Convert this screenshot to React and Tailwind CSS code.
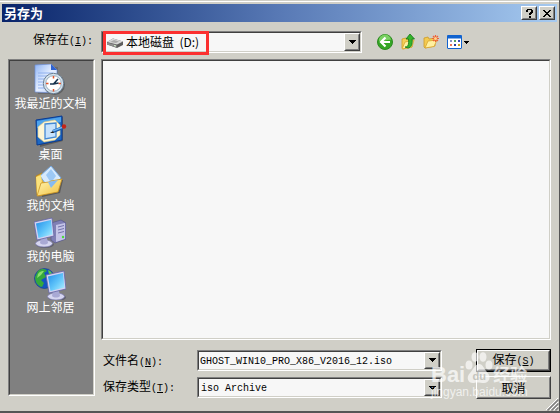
import { useState } from 'react';

const SUNKEN = 'border border-t-[#808080] border-l-[#808080] border-b-white border-r-white';
const SUNKEN_INNER = 'border border-t-[#404040] border-l-[#404040] border-b-[#d0cfc7] border-r-[#d0cfc7]';
const RAISED = 'border border-t-white border-l-white border-b-[#404040] border-r-[#404040]';
const RAISED_INNER = 'border border-t-[#d0cfc7] border-l-[#d0cfc7] border-b-[#808080] border-r-[#808080]';
const MONO = "font-['Liberation_Mono','Noto_Sans_CJK_SC',monospace] text-[10px]";

function RecentIcon() {
  return (
    <svg width="32" height="32" viewBox="0 0 32 32" aria-hidden="true">
      <defs>
        <linearGradient id="page" x1="0" y1="0" x2="1" y2="1">
          <stop offset="0" stopColor="#8fb4f4" />
          <stop offset="0.5" stopColor="#e6efff" />
          <stop offset="1" stopColor="#b9cffa" />
        </linearGradient>
      </defs>
      <path d="M2 2l22 1v27H4z" fill="#555" opacity="0.5" />
      <path d="M1 1l16-1 6 6v23L1 28z" fill="url(#page)" stroke="#6f8fd8" strokeWidth="0.7" />
      <path d="M17 0v6h6z" fill="#2f62cf" />
      <path d="M4 9h15M4 12h10M4 15h7M4 18h5M4 21h5M4 24h6" stroke="#8fb0ee" />
      <circle cx="20.5" cy="20.5" r="10.5" fill="#4a4a4a" opacity="0.6" />
      <circle cx="19.5" cy="19.5" r="10.2" fill="#d5e2ec" stroke="#6a7f94" />
      <circle cx="19.5" cy="19.5" r="7.8" fill="#fff" stroke="#9ab0c2" />
      <path d="M19.5 12v2.5M19.5 25v2.5M12 19.5h2.5M24.5 19.5H27" stroke="#e0542c" strokeWidth="1.5" />
      <path d="M24 15l-4.5 5H16M19.5 20l5-1" stroke="#17324d" strokeWidth="1.6" fill="none" />
    </svg>
  );
}

function DesktopIcon() {
  return (
    <svg width="32" height="32" viewBox="0 0 32 32" aria-hidden="true">
      <path d="M3 6l25-4v24L5 32z" fill="#444" opacity="0.6" />
      <path d="M1 5l26-4v24L2 30z" fill="#1d69c4" stroke="#0a3b92" />
      <path d="M2 6l24-4v5L2 13z" fill="#4ea3ec" />
      <path d="M9 7l11-2 5 5v10l-5 5-11 2-6-5V12z" fill="#fdf6d5" stroke="#e4c877" strokeWidth="0.6" />
      <path d="M10 9l11-1v14l-11 2z" fill="#c6e2fc" stroke="#4489d4" strokeWidth="1.3" />
      <path d="M18 16.5l10-4" stroke="#1b5cad" strokeWidth="3.5" />
      <path d="M18 16l10-4" stroke="#6db3f2" strokeWidth="1.5" />
      <circle cx="29" cy="11.5" r="2.2" fill="#c42418" />
      <path d="M15 18l3-2 1 2z" fill="#202020" />
    </svg>
  );
}

function DocumentsIcon() {
  return (
    <svg width="32" height="32" viewBox="0 0 32 32" aria-hidden="true">
      <defs>
        <linearGradient id="folderFront" x1="0" y1="0" x2="1" y2="1">
          <stop offset="0" stopColor="#fff7b5" />
          <stop offset="1" stopColor="#f2bf3d" />
        </linearGradient>
      </defs>
      <path d="M5 13l24 1-3 13-18 4z" fill="#3f3f3f" opacity="0.6" />
      <path d="M2 10l6-3 3 3 13-2 1 16-20 6-2-1z" fill="#e8b437" stroke="#b57d10" strokeWidth="0.7" />
      <path d="M6 10L17 0l10 12-11 12z" fill="#d6eafd" stroke="#75a9e2" />
      <path d="M12 9l5-6 5 7-5 7z" fill="#9cc9f5" />
      <path d="M2 11l5-2 1 8-4 13-1-1z" fill="#fbe27c" />
      <path d="M3 30l4-13 8-1 2-1 11-2-4 13z" fill="url(#folderFront)" stroke="#c9921f" strokeWidth="0.8" />
      <path d="M14 16l3 6 7-8z" fill="#86baf0" />
    </svg>
  );
}

function Monitor() {
  return (
    <g>
      <ellipse cx="11" cy="27.5" rx="9" ry="3.5" fill="#3f3f55" opacity="0.5" />
      <ellipse cx="10" cy="26.5" rx="8.5" ry="3.5" fill="#d6d6f0" stroke="#7b7bb0" strokeWidth="0.7" />
      <path d="M7 21h6l1 5c-2 2-6 2-8 0z" fill="#a9a9d4" />
      <path d="M0 5l18-4 2 18-17 4z" fill="#d3d3f1" stroke="#6363a4" strokeWidth="0.8" />
      <path d="M2 6.5L17 3l1.5 14.5L4.5 21z" fill="url(#screen)" />
    </g>
  );
}

function ComputerIcon() {
  return (
    <svg width="32" height="32" viewBox="0 0 32 32" aria-hidden="true">
      <defs>
        <linearGradient id="screen" x1="0" y1="0" x2="1" y2="1">
          <stop offset="0" stopColor="#218de9" />
          <stop offset="0.55" stopColor="#62c6fa" />
          <stop offset="1" stopColor="#b5f1ff" />
        </linearGradient>
      </defs>
      <path d="M17 6l10-3 5 3v16l-11 4-4-3z" fill="#8080b5" stroke="#56568c" strokeWidth="0.7" />
      <path d="M22 8l9-2v16l-9 3z" fill="#c4c4e7" />
      <path d="M24 10l6-1.5M24 13l6-1.5M24 16l6-1.5" stroke="#7474ac" />
      <circle cx="29" cy="20" r="1.2" fill="#48dd38" />
      <Monitor />
    </svg>
  );
}

function NetworkIcon() {
  return (
    <svg width="32" height="32" viewBox="0 0 32 32" aria-hidden="true">
      <circle cx="10.5" cy="10.5" r="10" fill="#1555bf" stroke="#0b3a8c" strokeWidth="0.6" />
      <path d="M4 3c4-3 8-2 9 0l-3 2 2 4-5 3 3 3-2 4C3 18 1 13 1 9z" fill="#36a83b" />
      <path d="M14 2c3 1 5 4 5 6l-4-2z" fill="#5acc46" />
      <path d="M4 6c2-3 4-3 6-3L7 7l-4 3z" fill="#8be06c" />
      <g transform="translate(12 2)">
        <Monitor />
      </g>
    </svg>
  );
}

function DriveIcon() {
  return (
    <svg width="16" height="10" viewBox="0 0 16 10" aria-hidden="true">
      <path d="M0 4l6-3.5 10 3V7l-6 3L0 6.5z" fill="#5d5d5d" />
      <path d="M0 4l6-3.5 10 3-6 3z" fill="#d9d9d9" />
      <path d="M3 4l4-2 5 1.5-3 1.5z" fill="#aaa" />
      <path d="M0 4.5l9.5 2.5v2.5L0 6.5z" fill="#8d8d8d" />
      <path d="M7 7.5l2 .5" stroke="#d8f5d0" />
    </svg>
  );
}

function BackIcon() {
  return (
    <svg width="16" height="16" viewBox="0 0 16 16" aria-hidden="true">
      <circle cx="8" cy="8" r="7.5" fill="#35a625" stroke="#2c8a20" />
      <path d="M2 7a6 6 0 0112-1c-4-1-8 2-12 1z" fill="#7ad062" />
      <path d="M8.5 3.5L4 8l4.5 4.5M4.5 8H13" fill="none" stroke="#fff" strokeWidth="2.2" />
    </svg>
  );
}

function UpIcon() {
  return (
    <svg width="14" height="16" viewBox="0 0 14 16" aria-hidden="true">
      <path d="M1 5l4-1 1 1 5-1v9l-9 2-1-1z" fill="#f4cf58" stroke="#cf9d25" strokeWidth="0.8" />
      <path d="M1 15l3-7 9-2-2 7z" fill="#fff0a0" stroke="#d8a52d" strokeWidth="0.8" />
      <path d="M4 13c3 0 4-2 3.500-8H5l4-5 4.500 5H11c1 5-1 9-4 9z" fill="#35b52a" stroke="#13751a" strokeWidth="0.8" />
    </svg>
  );
}

function NewFolderIcon() {
  return (
    <svg width="16" height="14" viewBox="0 0 16 14" aria-hidden="true">
      <path d="M1 3l4-1 1 2 6-1v8l-10 2-1-1z" fill="#f3ca50" stroke="#cc9b28" strokeWidth="0.8" />
      <path d="M2 13l3-7 9-1-3 6.500z" fill="#fff0a0" stroke="#d8a52d" strokeWidth="0.8" />
      <path d="M12.5 0v7M9 3.5h7M10 1l5 5M15 1l-5 5" stroke="#ee6038" strokeWidth="1.2" />
      <circle cx="12.5" cy="3.5" r="1.5" fill="#ffd58a" />
    </svg>
  );
}

function ViewIcon() {
  return (
    <svg width="22" height="14" viewBox="0 0 22 14" aria-hidden="true">
      <rect x="0.5" y="0.5" width="14" height="13" rx="0.5" fill="#fff" stroke="#1163cf" />
      <path d="M0 2h15" stroke="#1163cf" strokeWidth="3" />
      <path d="M3 5h2v2H3z" fill="#8292c8" />
      <path d="M7 5h2v2H7z" fill="#5aa55a" />
      <path d="M11 5h2v2h-2z" fill="#394ab8" />
      <path d="M3 9h2v2H3z" fill="#ed7754" />
      <path d="M7 9h2v2H7z" fill="#243fa2" />
      <path d="M11 9h2v2h-2z" fill="#c5a11e" />
      <path d="M17 6h5v1h-1v1h-1v1h-1V8h-1V7h-1z" fill="#000" />
    </svg>
  );
}

function HelpGlyph() {
  return (
    <svg width="7" height="9" viewBox="0 0 7 9" aria-hidden="true" shapeRendering="crispEdges">
      <path d="M1 0h5v1h1v3H6v1H5v1H3V4h1V3h1V1H2v2H0V1h1zM3 7h2v2H3z" />
    </svg>
  );
}

function CloseGlyph() {
  return (
    <svg width="8" height="7" viewBox="0 0 8 7" aria-hidden="true" shapeRendering="crispEdges">
      <path d="M0 0h2v1h1v1h2V1h1V0h2v1H7v1H6v1H5v1h1v1h1v1h1v1H6V6H5V5H3v1H2v1H0V6h1V5h1V4h1V3H2V2H1V1H0z" />
    </svg>
  );
}

function Key({ children }) {
  return (
    <span className={MONO}>
      (<u>{children}</u>)
    </span>
  );
}

function DropArrow() {
  return (
    <span className={`pointer-events-none absolute inset-y-px right-px w-4 bg-[#d0cfc7] ${RAISED}`}>
      <span className={`flex h-full items-center justify-center ${RAISED_INNER}`}>
        <svg width="7" height="4" viewBox="0 0 7 4" aria-hidden="true" shapeRendering="crispEdges">
          <path d="M0 0h7v1H6v1H5v1H4v1H3V3H2V2H1V1H0z" />
        </svg>
      </span>
    </span>
  );
}

function Field({ className, children }) {
  return (
    <div className={`relative ${SUNKEN} ${className}`}>
      <div className={`h-full bg-[#f7f7f7] ${SUNKEN_INNER}`}>{children}</div>
      <DropArrow />
    </div>
  );
}

function TitleButton({ label, children }) {
  return (
    <button type="button" aria-label={label} className={`h-[14px] w-4 bg-[#d0cfc7] ${RAISED}`}>
      <span className={`flex h-full items-center justify-center ${RAISED_INNER}`}>{children}</span>
    </button>
  );
}

const PLACES = [
  { name: '我最近的文档', Icon: RecentIcon },
  { name: '桌面', Icon: DesktopIcon },
  { name: '我的文档', Icon: DocumentsIcon },
  { name: '我的电脑', Icon: ComputerIcon },
  { name: '网上邻居', Icon: NetworkIcon },
];

const TOOLS = [
  { name: '后退', Icon: BackIcon },
  { name: '向上一级', Icon: UpIcon },
  { name: '新建文件夹', Icon: NewFolderIcon },
  { name: '查看', Icon: ViewIcon },
];

function Watermark() {
  return (
    <div className="pointer-events-none absolute right-[28px] bottom-[11px] w-[100px] font-['Liberation_Sans','Noto_Sans_CJK_SC',sans-serif] text-white/70">
      <div className="flex h-8 items-end">
        <span className="text-[22px] leading-[18px] font-bold">Bai</span>
        <span className="relative h-8 w-7">
          <svg className="absolute inset-0" width="28" height="32" viewBox="0 0 28 32" aria-hidden="true">
            <g fill="#fff" fillOpacity="0.65">
              <ellipse cx="4" cy="13" rx="3.5" ry="4.5" />
              <ellipse cx="10" cy="5" rx="3.5" ry="4.8" />
              <ellipse cx="18" cy="5" rx="3.5" ry="4.8" />
              <ellipse cx="24" cy="13" rx="3.5" ry="4.5" />
              <path d="M14 12c4 0 5 5 8 8 5 5 2 11-3 11-3 0-7-1-10 0-5 1-9-5-4-10 3-3 5-9 9-9z" />
            </g>
          </svg>
          <span className="absolute inset-x-0 bottom-[2px] text-center text-[11px] leading-3 font-bold text-[#c4c4be]">du</span>
        </span>
        <span className="text-[17px] leading-4 font-bold">经验</span>
      </div>
      <div className="text-[12px] leading-4">jingyan.baidu.com</div>
    </div>
  );
}

export default function App() {
  const [fileName, setFileName] = useState('GHOST_WIN10_PRO_X86_V2016_12.iso');

  return (
    <div className="relative flex min-h-screen flex-col border-r border-b-2 border-[#555] bg-[#d0cfc7] font-['Noto_Sans_CJK_SC',sans-serif] text-[12px] leading-4 text-black">
      {/* Title bar */}
      <div className="border-t border-[#d0cfc7]">
        <div className="border-t border-white px-[2px] pt-[2px]">
          <header className="flex h-[18px] items-center bg-linear-to-r from-[#0a246a] via-[#5879b5] to-[#a6caf0] px-[2px]">
            <h1 className="flex-1 text-[13px] leading-4 font-bold text-white">另存为</h1>
            <div className="flex gap-[2px]">
              <TitleButton label="帮助"><HelpGlyph /></TitleButton>
              <TitleButton label="关闭"><CloseGlyph /></TitleButton>
            </div>
          </header>
        </div>
      </div>

      {/* Location row */}
      <div className="mt-[9px] flex items-center gap-2 pr-2">
        <label htmlFor="location" className="w-[93px] shrink-0 pb-[3px] text-right">
          保存在<Key>I</Key><span className={MONO}>:</span>
        </label>
        <div className="relative w-[261px]">
          <Field className="h-[22px]">
            <select id="location" className="block h-full w-full appearance-none pl-[23px] outline-none">
              <option>本地磁盘&nbsp;&nbsp;(D:)</option>
            </select>
          </Field>
          <span className="pointer-events-none absolute top-[7px] left-[6px]"><DriveIcon /></span>
          <span className="pointer-events-none absolute top-0 left-[2px] h-6 w-[106px] border-3 border-[#fb3030]" />
        </div>
        <div className="ml-[7px] flex items-center gap-2">
          {TOOLS.map(({ name, Icon }) => (
            <button key={name} type="button" aria-label={name}>
              <Icon />
            </button>
          ))}
        </div>
      </div>

      <div className="mt-[6px] flex flex-1 gap-[6px] pr-2 pb-[12px] pl-2">
        {/* Places bar */}
        <nav className={`mb-[3px] w-[87px] shrink-0 ${SUNKEN}`}>
          <div className={`flex h-full flex-col items-center gap-1 bg-[#808080] pt-[3px] pr-[2px] ${SUNKEN_INNER}`}>
            {PLACES.map(({ name, Icon }) => (
              <button key={name} type="button" className="flex flex-col items-center whitespace-nowrap text-white">
                <Icon />
                <span className="h-[15px] leading-[14px]">{name}</span>
              </button>
            ))}
          </div>
        </nav>

        <main className="flex min-w-0 flex-1 flex-col">
          <div className={`flex-1 ${SUNKEN}`}>
            <div className={`h-full bg-[#f7f7f7] ${SUNKEN_INNER}`} />
          </div>

          {/* File name and type */}
          <div className="mt-[9px] flex pl-[2px]">
            <div className="flex flex-1 flex-col gap-[6px]">
              <div className="flex items-center">
                <label htmlFor="file-name" className="w-[94px] shrink-0 pt-[3px]">
                  文件名<Key>N</Key><span className={MONO}>:</span>
                </label>
                <Field className="h-[21px] flex-1">
                  <input
                    id="file-name"
                    value={fileName}
                    onChange={(e) => setFileName(e.target.value)}
                    className={`block h-full w-full pt-[2px] pr-4 pl-px outline-none ${MONO}`}
                  />
                </Field>
              </div>
              <div className="flex items-center">
                <label htmlFor="file-type" className="w-[94px] shrink-0">
                  保存类型<Key>T</Key><span className={MONO}>:</span>
                </label>
                <Field className="h-[21px] flex-1">
                  <select id="file-type" className={`block h-full w-full appearance-none pt-[2px] pl-[2px] outline-none ${MONO}`}>
                    <option>iso Archive</option>
                  </select>
                </Field>
              </div>
            </div>
            <div className="ml-[34px] flex w-[75px] flex-col gap-1">
              <button type="submit" className="h-[23px] border border-black">
                <span className={`block h-full ${RAISED}`}>
                  <span className={`flex h-full items-center justify-center ${RAISED_INNER}`}>
                    <span className="relative z-10">保存<Key>S</Key></span>
                  </span>
                </span>
              </button>
              <button type="button" className={`h-[23px] ${RAISED}`}>
                <span className={`flex h-full items-center justify-center ${RAISED_INNER}`}>
                  <span className="relative z-10">取消</span>
                </span>
              </button>
            </div>
          </div>
        </main>
      </div>

      <Watermark />

      {/* Resize grip */}
      <svg className="absolute right-0 bottom-0" width="13" height="13" viewBox="0 0 13 13" aria-hidden="true">
        <path d="M0 12L12 0M4 12l8-8M8 12l4-4" stroke="#fff" />
        <path d="M1.5 12.5l11-11M5.5 12.5l7-7M9.5 12.5l3-3" stroke="#808080" strokeWidth="1.5" />
      </svg>
    </div>
  );
}
